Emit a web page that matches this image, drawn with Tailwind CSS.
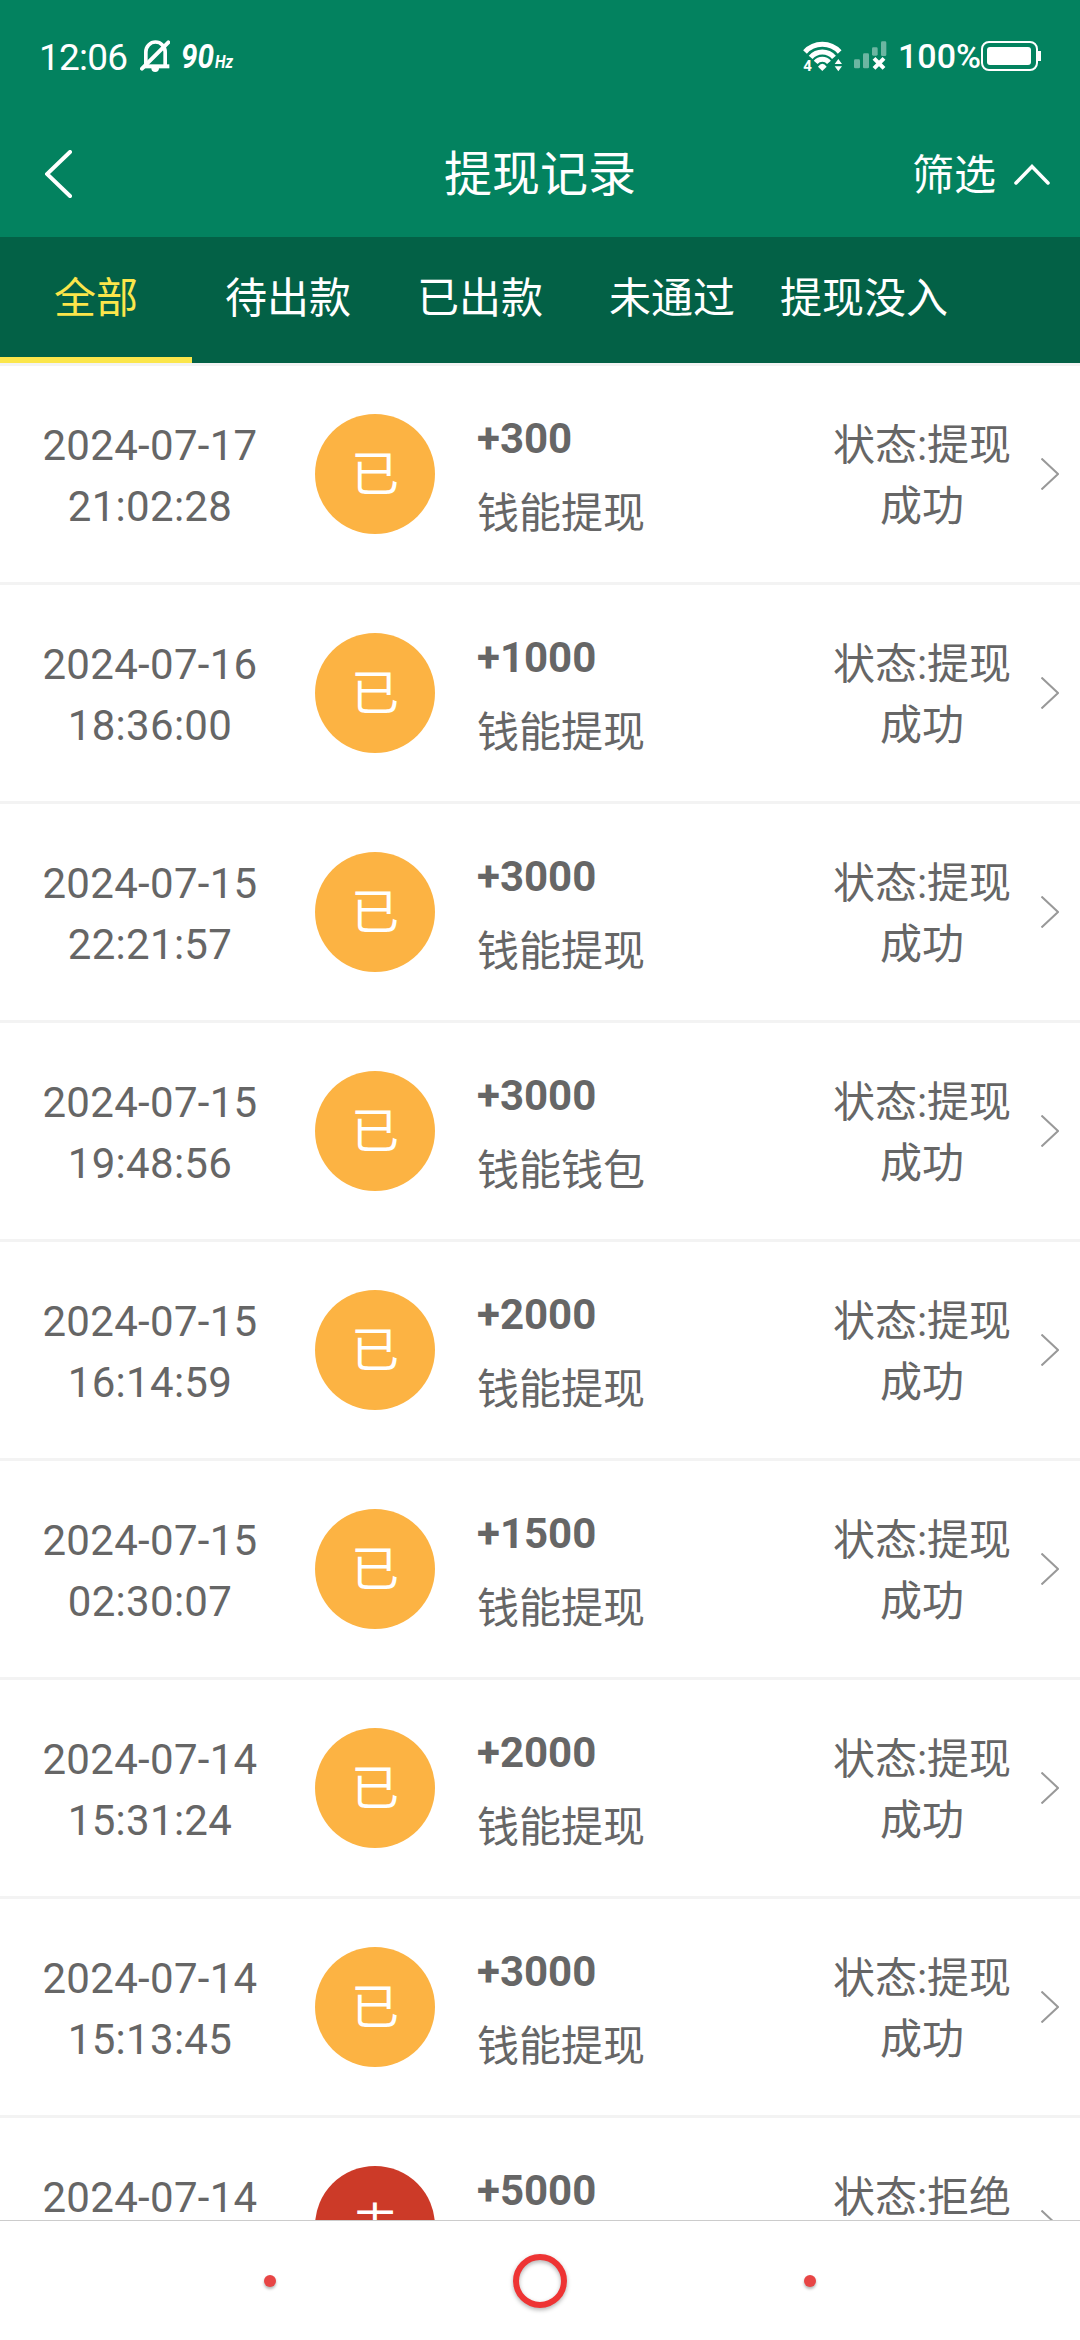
<!doctype html>
<html lang="zh-CN">
  <head>
    <meta charset="utf-8" />
    <meta name="viewport" content="width=device-width, initial-scale=1" />
    <script src="https://cdn.jsdelivr.net/npm/@tailwindcss/browser@4"></script>
    <title>提现记录</title>
  </head>
  <body
    class="flex flex-col h-[2340px] w-[1080px] overflow-hidden bg-white font-['Roboto','Noto_Sans_CJK_SC',sans-serif] text-[42px] text-[#666]"
  >
    <header class="flex flex-col h-[237px] shrink-0 bg-[#03825f] text-white">
      <!-- status bar -->
      <div class="flex h-28 items-center justify-between pl-[39px] pr-[39px]">
        <div class="flex items-center">
          <span class="text-[37px] leading-none tracking-[-0.8px] w-[101px] pt-0.5">12:06</span>
          <svg class="w-[30px] h-8" viewBox="0 0 90 96" fill="none">
            <path d="M17.500 78V36a29 30 0 0 1 58 0V78" stroke="#fff" stroke-width="11" />
            <path d="M12 79h76" stroke="#fff" stroke-width="12" />
            <path d="M34 84h23a11.500 12 0 0 1-23 0z" fill="#fff" />
            <path d="M6 86L85 7" stroke="#fff" stroke-width="12" stroke-linecap="round" />
          </svg>
          <svg class="w-14 h-8 ml-[11px] overflow-visible" viewBox="0 0 56 32" fill="#fff">
            <text x="0" y="28" font-size="34" font-weight="700" font-style="italic" textLength="33" lengthAdjust="spacingAndGlyphs">90</text>
            <text x="34" y="28" font-size="18" font-weight="700" font-style="italic" textLength="18" lengthAdjust="spacingAndGlyphs">Hz</text>
          </svg>
        </div>
        <div class="flex items-center">
          <svg class="w-[41px] h-8 overflow-visible" viewBox="0 0 123 96" fill="none">
            <g stroke="#fff" stroke-width="15">
              <path d="M12 36a70 70 0 0 1 104 0" />
              <path d="M29 52a46 46 0 0 1 70 0" />
              <path d="M44 67a26 26 0 0 1 40 0" />
            </g>
            <path d="M64 93L51 80q13-18 26 0z" fill="#fff" />
            <text x="7" y="93" font-size="45" font-weight="700" fill="#fff">4</text>
            <path d="M112 57l11 15h-22zM112 94l11-15h-22z" fill="#fff" />
          </svg>
          <svg class="w-[33px] h-8 ml-3" viewBox="0 0 99 96">
            <g fill="#fff" fill-opacity=".42">
              <rect y="58" width="18" height="27" rx="4" />
              <rect x="27" y="40" width="18" height="45" rx="4" />
              <rect x="54" y="22" width="17" height="25" rx="4" />
              <rect x="81" y="4" width="16" height="44" rx="4" />
            </g>
            <path d="M60 55l30 30M90 55l-30 30" stroke="#fff" stroke-width="12" />
          </svg>
          <span class="ml-[11px] text-[34px] leading-none font-medium">100%</span>
          <svg class="w-[60px] h-[30px]" viewBox="0 0 60 30">
            <rect x="1" y="1" width="55" height="28" rx="7" fill="none" stroke="#fff" stroke-width="2" />
            <rect x="6" y="6" width="44" height="18" rx="3" fill="#fff" />
            <path d="M57 10h3v10h-3z" fill="#fff" />
          </svg>
        </div>
      </div>

      <!-- title bar -->
      <div class="grid grid-cols-3 h-[125px] items-center px-[45px]">
        <svg class="w-7 h-12 -mt-0.5" viewBox="0 0 28 48" fill="none">
          <path d="M25 2L2 24l23 22" stroke="#fff" stroke-width="4" stroke-linecap="round" />
        </svg>
        <h1 class="text-center text-[48px] leading-none">提现记录</h1>
        <div class="-mr-[15px] flex items-center justify-end">
          <span class="pt-0.5 leading-none">筛选</span>
          <svg class="w-9 h-[21px] ml-[18px]" viewBox="0 0 36 21" fill="none">
            <path d="M2 19L18 2.500L34 19" stroke="#fff" stroke-width="3.500" stroke-linecap="round" />
          </svg>
        </div>
      </div>
    </header>

    <nav class="flex h-[126px] shrink-0 bg-[#036146] text-white text-center leading-[123px]">
      <a class="w-48 border-b-6 border-[#fbe64b] text-[#fbe64b]">全部</a>
      <a class="w-48">待出款</a>
      <a class="w-48">已出款</a>
      <a class="w-48">未通过</a>
      <a class="w-48">提现没入</a>
    </nav>

    <main class="h-[1857px] shrink-0 overflow-hidden border-t-3 border-[#f3f3f3]" id="list"></main>

    <!-- system navigation -->
    <footer class="flex grow items-center justify-between border-t border-[#ccc] px-66">
      <span class="size-3 rounded-full bg-[#e84545] shadow-[0_2px_3px_rgba(0,0,0,0.3)]"></span>
      <svg class="size-[54px] overflow-visible drop-shadow-[0_2px_2px_rgba(0,0,0,0.3)]" viewBox="0 0 54 54">
        <circle cx="27" cy="27" r="24" fill="none" stroke="#ee3434" stroke-width="6" />
      </svg>
      <span class="size-3 rounded-full bg-[#e84545] shadow-[0_2px_3px_rgba(0,0,0,0.3)]"></span>
    </footer>

    <script>
      const records = [
        { date: "2024-07-17", time: "21:02:28", amount: 300, type: "钱能提现" },
        { date: "2024-07-16", time: "18:36:00", amount: 1000, type: "钱能提现" },
        { date: "2024-07-15", time: "22:21:57", amount: 3000, type: "钱能提现" },
        { date: "2024-07-15", time: "19:48:56", amount: 3000, type: "钱能钱包" },
        { date: "2024-07-15", time: "16:14:59", amount: 2000, type: "钱能提现" },
        { date: "2024-07-15", time: "02:30:07", amount: 1500, type: "钱能提现" },
        { date: "2024-07-14", time: "15:31:24", amount: 2000, type: "钱能提现" },
        { date: "2024-07-14", time: "15:13:45", amount: 3000, type: "钱能提现" },
        { date: "2024-07-14", time: "", amount: 5000, type: "", rejected: true },
      ];

      document.getElementById("list").innerHTML = records
        .map(
          (r) => `
        <div class="flex h-[219px] items-center border-b-3 border-[#f3f3f3]">
          <div class="w-[300px] h-[122px] pt-0.5 text-center leading-[61px] tracking-[0.3px]">${r.date}<br />${r.time}</div>
          <div class="ml-[15px] flex size-[120px] items-center justify-center rounded-full pt-0.5 text-[48px] leading-none text-white ${r.rejected ? "bg-[#cc3a28]" : "bg-[#fcb343]"}">${r.rejected ? "未" : "已"}</div>
          <div class="ml-[42px] w-[333px] h-[134px] pt-px">
            <div class="h-[75px] leading-[61px] font-bold">+${r.amount}</div>
            <div class="leading-[61px]">${r.type}</div>
          </div>
          <div class="w-[224px] h-[122px] pt-0.5 text-center leading-[61px]">状态:${r.rejected ? "拒绝" : "提现<br />成功"}</div>
          <svg class="ml-[7px] w-[18px] h-8" viewBox="0 0 18 32" fill="none">
            <path d="M0.500 0.500L17 16L0.500 31.500" stroke="#999" stroke-width="2" />
          </svg>
        </div>`,
        )
        .join("");
    </script>
  </body>
</html>
